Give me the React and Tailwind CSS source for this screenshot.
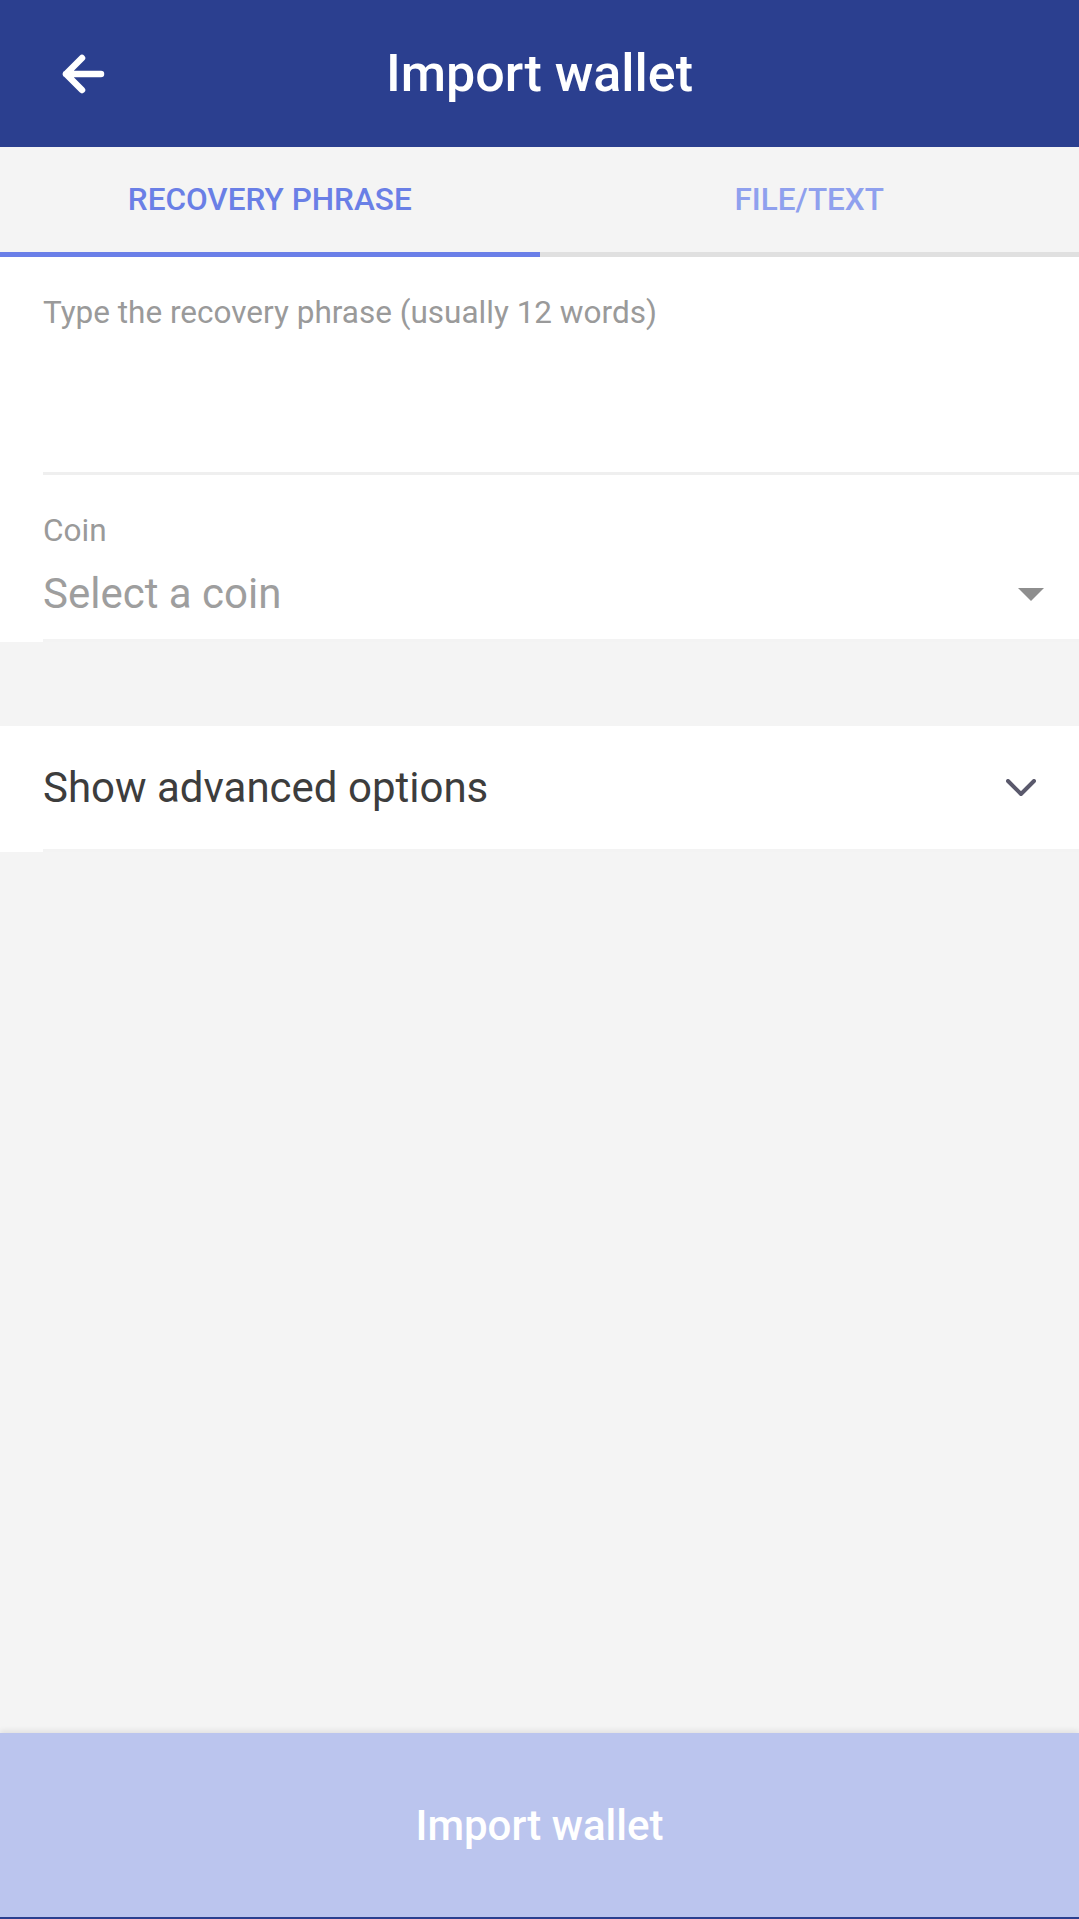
import React, { useState } from "react";

// Back arrow drawn with round caps, as in the toolbar
const BackArrow = () => (
  <svg width="48" height="48" viewBox="0 0 48 48" fill="none">
    <path
      d="M7 24H42M23 8L7 24L23 40"
      stroke="#ffffff"
      strokeWidth="6.5"
      strokeLinecap="round"
      strokeLinejoin="round"
    />
  </svg>
);

const tabs = ["RECOVERY PHRASE", "FILE/TEXT"];

const App = () => {
  const [active, setActive] = useState(0);

  return (
    <div className="flex h-screen flex-col bg-[#f4f4f4] font-['Roboto',sans-serif]">
      {/* Toolbar */}
      <header className="flex h-[147px] shrink-0 items-center bg-[#2b3f8f]">
        <button className="w-[107px] pl-[59px]" aria-label="Back">
          <BackArrow />
        </button>
        <h1 className="flex-1 text-center text-[52px] font-medium leading-none text-white">
          Import wallet
        </h1>
        <div className="w-[107px]" />
      </header>

      {/* Tabs */}
      <nav className="grid h-[110px] shrink-0 grid-cols-2 bg-[#f4f4f4]">
        {tabs.map((t, i) => (
          <button key={t} onClick={() => setActive(i)} className="flex flex-col">
            <span
              className={
                i === active
                  ? "flex flex-1 items-center justify-center text-[31.5px] font-medium text-[#6a7fe6]"
                  : "flex flex-1 items-center justify-center text-[31.5px] font-medium text-[#8fa0ee]"
              }
            >
              {t}
            </span>
            <span
              className={i === active ? "h-[5px] bg-[#6a7fe8]" : "h-[5px] bg-[#e0e0e0]"}
            />
          </button>
        ))}
      </nav>

      {/* Recovery phrase + coin */}
      <section className="shrink-0 bg-white">
        <div className="h-[215px] pl-[43px] pt-[37px]">
          <p className="text-[31.5px] leading-[37px] text-[#9a9a9a]">
            Type the recovery phrase (usually 12 words)
          </p>
        </div>
        <div className="ml-[43px] h-[3px] bg-[#efefef]" />
        <div className="pl-[43px] pr-[35px] pt-[37px]">
          <p className="text-[31.5px] leading-[37px] text-[#9a9a9a]">Coin</p>
          <div className="mt-[20px] flex h-[50px] items-center justify-between">
            <span className="text-[42px] leading-[50px] text-[#9e9e9e]">Select a coin</span>
            <svg width="26" height="13" viewBox="0 0 26 13">
              <polygon points="0,0 26,0 13,13" fill="#8e8e8e" />
            </svg>
          </div>
        </div>
        <div className="h-[20px]" />
        <div className="ml-[43px] h-[3px] bg-[#f3f3f3]" />
      </section>

      <div className="h-[84px] shrink-0" />

      {/* Advanced options */}
      <section className="shrink-0 bg-white">
        <div className="flex h-[123px] items-center justify-between pl-[43px] pr-[43px]">
          <span className="text-[42px] leading-[50px] text-[#3d3d3d]">Show advanced options</span>
          <svg width="30" height="18" viewBox="0 0 30 18" fill="none">
            <path
              d="M2 2L15 15L28 2"
              stroke="#5a596c"
              strokeWidth="4"
              strokeLinecap="round"
              strokeLinejoin="round"
            />
          </svg>
        </div>
        <div className="ml-[43px] h-[3px] bg-[#f3f3f3]" />
      </section>

      <div className="flex-1" />

      {/* Bottom action */}
      <button className="flex h-[184px] shrink-0 items-center justify-center bg-[#bbc5ee] text-[42px] font-medium text-white shadow-[0_-3px_5px_rgba(0,0,0,0.07)]">
        Import wallet
      </button>
      <div className="h-[2px] shrink-0 bg-[#2b3f8f]" />
    </div>
  );
};

export default App;
